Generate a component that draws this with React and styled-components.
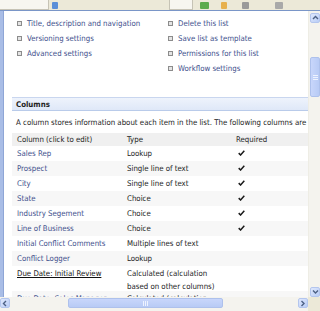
import React from "react";
import styled, { createGlobalStyle } from "styled-components";

const Global = createGlobalStyle`
  html, body {
    margin: 0;
    padding: 0;
    background: #ece9d8;
  }
  body {
    font-family: "DejaVu Sans Condensed", "DejaVu Sans", sans-serif;
    font-stretch: condensed;
    font-size: 7.8px;
  }
`;

const Window = styled.div`
  width: 320px;
  height: 311px;
  overflow: hidden;
  display: grid;
  grid-template-rows: 10px 1px 286px 14px;
  grid-template-columns: 4px 304px 12px;
  background: #ece9d8;
`;

const Toolbar = styled.div`
  grid-column: 1 / 4;
  display: flex;
  align-items: stretch;
  background: #ece9d8;
`;

const Tab = styled.div`
  width: ${(p) => p.$w}px;
  margin-left: ${(p) => p.$ml || 0}px;
  background: #f7f6f0;
  border-right: 1px solid #c6c3b5;
  border-left: ${(p) => (p.$ml ? "1px solid #c6c3b5" : "none")};
  border-bottom: 1px solid #c6c3b5;
  box-sizing: border-box;
`;

const ToolIcon = styled.div`
  width: ${(p) => p.$w || 7}px;
  height: 7px;
  margin-left: ${(p) => p.$ml}px;
  align-self: flex-end;
  margin-bottom: 1px;
  background: ${(p) => p.$c};
  border-radius: 1px;
`;

const Rule = styled.div`
  grid-column: 1 / 4;
  background: #7a96c8;
`;

const Frame = styled.div`
  background: #a9bde6;
  border-right: 1px solid #8fa6d6;
  box-sizing: border-box;
`;

const Content = styled.div`
  background: #fff;
  overflow: hidden;
  padding-top: 5px;
  box-sizing: border-box;
`;

const Links = styled.div`
  display: grid;
  grid-template-columns: 151px 1fr;
  padding-left: 13px;
`;

const LinkList = styled.ul`
  list-style: none;
  margin: 0;
  padding: 0;
`;

const LinkItem = styled.li`
  display: flex;
  align-items: center;
  height: 15px;
  color: #3e4f8c;
  white-space: nowrap;
`;

const Bullet = styled.span`
  width: 3px;
  height: 3px;
  border: 1px solid #8c8c8c;
  background: #e4e4e4;
  margin-right: 5px;
  flex: none;
`;

const SectionBar = styled.div`
  margin: 21px 0 0 8px;
  height: 14px;
  display: flex;
  align-items: center;
  padding-left: 4px;
  background: linear-gradient(#eef3fc, #dfe8f8);
  border-top: 1px solid #c9d6ef;
  border-bottom: 1px solid #b9cbea;
  box-sizing: border-box;
  font-weight: bold;
  color: #1f1f1f;
`;

const Description = styled.div`
  margin: 5px 0 0 12px;
  height: 14px;
  line-height: 14px;
  color: #222;
  white-space: nowrap;
`;

const Table = styled.div`
  margin: 3px 0 0 8px;
  display: grid;
  grid-template-columns: 110px 109px 1fr;
  grid-auto-rows: auto;
`;

const Row = styled.div`
  display: contents;
`;

const Cell = styled.div`
  background: ${(p) => p.$bg};
  padding: ${(p) => (p.$head ? "0" : "1px")} 5px 0;
  height: ${(p) => p.$h}px;
  box-sizing: border-box;
  display: flex;
  flex-direction: column;
  justify-content: ${(p) => (p.$head ? "center" : "flex-start")};
  line-height: 13px;
  white-space: nowrap;
  overflow: hidden;
  color: ${(p) => (p.$name ? (p.$hover ? "#111" : "#3e4f8c") : "#222")};
  text-decoration: ${(p) => (p.$hover ? "underline" : "none")};
`;

const Check = () => (
  <svg width="7" height="6" viewBox="0 0 7 6">
    <path d="M0.7 3.1 L2.6 5 L6.3 0.8" fill="none" stroke="#1a1a1a" strokeWidth="1.5" />
  </svg>
);

const CheckWrap = styled.span`
  padding: 3px 0 0 2px;
  display: flex;
`;

const VScroll = styled.div`
  background: #f4f3ee;
  display: flex;
  flex-direction: column;
  align-items: center;
  padding: 2px 0 0 1px;
  border-left: 1px solid #eeede5;
  box-sizing: border-box;
`;

const ArrowBtn = styled.div`
  width: 10px;
  height: 10px;
  flex: none;
  border-radius: 2px;
  background: linear-gradient(135deg, #dfe8fd, #b9cdf6);
  border: 1px solid #b4c6ee;
  box-sizing: border-box;
  display: flex;
  align-items: center;
  justify-content: center;
`;

const Thumb = styled.div`
  width: 10px;
  height: ${(p) => p.$len}px;
  margin-top: ${(p) => p.$off}px;
  border-radius: 2px;
  background: linear-gradient(90deg, #c8d6fb, #b8cbf5);
  border: 1px solid #aec1ec;
  box-sizing: border-box;
  display: flex;
  align-items: center;
  justify-content: center;
  flex: none;
`;

const Spacer = styled.div`
  flex: 1;
`;

const HScroll = styled.div`
  grid-column: 1 / 3;
  background: #f4f3ee;
  display: flex;
  align-items: flex-start;
  padding-top: 1px;
  box-sizing: border-box;
`;

const HThumb = styled.div`
  width: 155px;
  height: 10px;
  margin-left: 58px;
  border-radius: 2px;
  background: linear-gradient(#c8d6fb, #b8cbf5);
  border: 1px solid #aec1ec;
  box-sizing: border-box;
  display: flex;
  align-items: center;
  justify-content: center;
`;

const Corner = styled.div`
  background: #ece9d8;
`;

const Arrow = ({ dir }) => {
  const paths = {
    up: "M1 4 L3.5 1.5 L6 4",
    down: "M1 1.5 L3.5 4 L6 1.5",
    left: "M4 1 L1.5 3.5 L4 6",
    right: "M1.5 1 L4 3.5 L1.5 6",
  };
  const vertical = dir === "up" || dir === "down";
  return (
    <svg width={vertical ? 7 : 6} height={vertical ? 6 : 7} viewBox={vertical ? "0 0 7 6" : "0 0 6 7"}>
      <path d={paths[dir]} fill="none" stroke="#4d6185" strokeWidth="1.4" />
    </svg>
  );
};

const Grip = ({ vertical }) => (
  <svg width={5} height={5} viewBox="0 0 5 5">
    {vertical
      ? [0.5, 2.5, 4.5].map((y) => <line key={y} x1="0" x2="5" y1={y} y2={y} stroke="#eef3ff" strokeWidth="1" />)
      : [0.5, 2.5, 4.5].map((x) => <line key={x} y1="0" y2="5" x1={x} x2={x} stroke="#eef3ff" strokeWidth="1" />)}
  </svg>
);

const leftLinks = ["Title, description and navigation", "Versioning settings", "Advanced settings"];
const rightLinks = ["Delete this list", "Save list as template", "Permissions for this list", "Workflow settings"];

const columns = [
  { name: "Sales Rep", type: "Lookup", req: true },
  { name: "Prospect", type: "Single line of text", req: true },
  { name: "City", type: "Single line of text", req: true },
  { name: "State", type: "Choice", req: true },
  { name: "Industry Segement", type: "Choice", req: true },
  { name: "Line of Business", type: "Choice", req: true },
  { name: "Initial Conflict Comments", type: "Multiple lines of text" },
  { name: "Conflict Logger", type: "Lookup" },
  { name: "Due Date: Initial Review", type: ["Calculated (calculation", "based on other columns)"], hover: true },
  { name: "Due Date: Sales Manager", type: ["Calculated (calculation", "based on other columns)"] },
];

export default function App() {
  return (
    <>
      <Global />
      <Window>
        <Toolbar>
          <Tab $w={49} />
          <ToolIcon $ml={3} $w={6} $c="#5b8fd8" />
          <Tab $w={24} $ml={111} />
          <ToolIcon $ml={7} $w={9} $c="#5cab4c" />
          <ToolIcon $ml={12} $w={6} $c="#e7b04c" />
          <ToolIcon $ml={15} $w={7} $c="#9a9a9a" />
          <ToolIcon $ml={26} $w={8} $c="#a9a9a9" />
        </Toolbar>
        <Rule />
        <Frame />
        <Content>
          <Links>
            <LinkList>
              {leftLinks.map((l) => (
                <LinkItem key={l}>
                  <Bullet />
                  {l}
                </LinkItem>
              ))}
            </LinkList>
            <LinkList>
              {rightLinks.map((l) => (
                <LinkItem key={l}>
                  <Bullet />
                  {l}
                </LinkItem>
              ))}
            </LinkList>
          </Links>
          <SectionBar>Columns</SectionBar>
          <Description>
            A column stores information about each item in the list. The following columns are
          </Description>
          <Table>
            <Row>
              <Cell $bg="#f0f0f0" $h={13} $head>Column (click to edit)</Cell>
              <Cell $bg="#f0f0f0" $h={13} $head>Type</Cell>
              <Cell $bg="#f0f0f0" $h={13} $head>Required</Cell>
            </Row>
            {columns.map((c, i) => {
              const bg = i % 2 === 1 ? "#f7f7f7" : "#fff";
              const h = Array.isArray(c.type) ? 25 : 15;
              return (
                <Row key={c.name}>
                  <Cell $bg={bg} $h={h} $name $hover={c.hover}>
                    <span>{c.name}</span>
                  </Cell>
                  <Cell $bg={bg} $h={h}>
                    {Array.isArray(c.type) ? c.type.map((t) => <span key={t}>{t}</span>) : c.type}
                  </Cell>
                  <Cell $bg={bg} $h={h}>
                    {c.req && (
                      <CheckWrap>
                        <Check />
                      </CheckWrap>
                    )}
                  </Cell>
                </Row>
              );
            })}
          </Table>
        </Content>
        <VScroll>
          <ArrowBtn>
            <Arrow dir="up" />
          </ArrowBtn>
          <Thumb $off={34} $len={40}>
            <Grip vertical />
          </Thumb>
          <Spacer />
          <ArrowBtn>
            <Arrow dir="down" />
          </ArrowBtn>
        </VScroll>
        <HScroll>
          <ArrowBtn>
            <Arrow dir="left" />
          </ArrowBtn>
          <HThumb>
            <Grip />
          </HThumb>
          <Spacer />
          <ArrowBtn>
            <Arrow dir="right" />
          </ArrowBtn>
        </HScroll>
        <Corner />
      </Window>
    </>
  );
}
